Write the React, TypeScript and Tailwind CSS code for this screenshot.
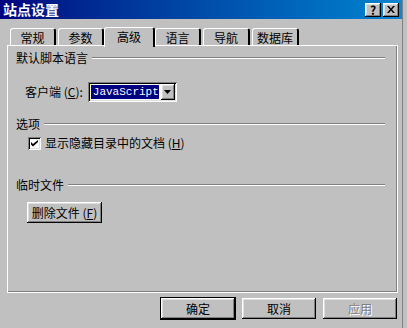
import React from "react";

const font = { fontFamily: '"Noto Sans CJK SC", "Liberation Sans", sans-serif' };

const raised =
  "bg-[#c0c0c0] shadow-[inset_-1px_-1px_#000,inset_1px_1px_#fff,inset_-2px_-2px_#808080,inset_2px_2px_#dfdfdf]";
const sunken =
  "shadow-[inset_1px_1px_#808080,inset_-1px_-1px_#fff,inset_2px_2px_#000,inset_-2px_-2px_#dfdfdf]";

function GroupTitle({ label }: { label: string }) {
  return (
    <div className="flex items-center h-[14px]">
      <span className="text-[12px] leading-[14px] text-black">{label}</span>
      <div className="flex-1 ml-[4px] h-[2px] border-t border-[#808080] border-b border-b-white" />
    </div>
  );
}

function Tab({ label, active, w }: { label: string; active?: boolean; w: string }) {
  if (active) {
    return (
      <div
        className={`${w} h-[20px] -mx-[2px] mb-[-2px] z-10 relative bg-[#c0c0c0] rounded-t-[3px] border-t border-l border-white border-r-2 border-r-black flex items-start justify-center pt-[2px] text-[12px] leading-[14px]`}
      >
        {label}
      </div>
    );
  }
  return (
    <div
      className={`${w} h-[17px] bg-[#c0c0c0] rounded-t-[3px] border-t border-l border-white border-r-2 border-r-black flex items-center justify-center pt-[1px] text-[12px] leading-[14px]`}
    >
      {label}
    </div>
  );
}

function Btn({ children, def, disabled }: { children: React.ReactNode; def?: boolean; disabled?: boolean }) {
  return (
    <div
      className={`w-[74px] h-[21px] flex items-center justify-center text-[12px] ${raised} ${def ? "outline outline-1 outline-black" : ""} ${disabled ? "text-[#808080] [text-shadow:1px_1px_#fff]" : "text-black"}`}
    >
      {children}
    </div>
  );
}

export default function App() {
  return (
    <div className="w-[407px] h-[328px] bg-[#c0c0c0] overflow-hidden flex" style={font}>
      <div className="w-[403px] flex flex-col border-r border-[#808080]">
        {/* title bar */}
        <div className="h-[19px] bg-linear-to-r from-[#000080] to-[#1084d0] flex items-center pl-[3px] pr-[3px]">
          <span className="text-white text-[14px] font-bold leading-[15px] flex-1">站点设置</span>
          <div className={`w-[16px] h-[14px] ${raised} flex items-center justify-center text-[12px] font-bold leading-none text-black`}>?</div>
          <div className={`w-[16px] h-[14px] ml-[2px] ${raised} flex items-center justify-center`}>
            <svg width="8" height="7" viewBox="0 0 8 7">
              <path d="M0 0h2l2 2.5L6 0h2L5 3.5 8 7H6L4 4.5 2 7H0l3-3.5z" fill="#000" />
            </svg>
          </div>
        </div>

        {/* tabs */}
        <div className="flex items-end pl-[10px] mt-[9px] h-[17px] gap-[2px]">
          <Tab label="常规" w="w-[46px]" />
          <Tab label="参数" w="w-[46px]" />
          <Tab label="高级" w="w-[51px]" active />
          <Tab label="语言" w="w-[46px]" />
          <Tab label="导航" w="w-[47px]" />
          <Tab label="数据库" w="w-[47px]" />
        </div>

        {/* panel */}
        <div className="ml-[7px] w-[391px] h-[248px] border-t border-l border-white border-r border-b border-black shadow-[inset_-1px_-1px_#808080] pl-[8px] pr-[12px] pt-[5px] flex flex-col text-[12px] text-black">
          <GroupTitle label="默认脚本语言" />
          <div className="flex items-center mt-[17px] pl-[9px] h-[20px]">
            <span className="leading-[14px]">
              客户端 (<span className="underline">C</span>):
            </span>
            <div className={`ml-[5px] w-[89px] h-[20px] bg-white ${sunken} flex items-center p-[2px]`}>
              <div
                className="flex-1 h-[14px] ml-[1px] bg-[#000080] text-white flex items-center pl-[2px] outline outline-1 outline-dotted outline-[#ffff80] text-[11px] leading-none"
                style={{ fontFamily: '"Liberation Mono", monospace' }}
              >
                JavaScript
              </div>
              <div className={`w-[16px] h-[16px] ml-[2px] ${raised} flex items-center justify-center`}>
                <svg width="7" height="4" viewBox="0 0 7 4">
                  <path d="M0 0h7L3.5 4z" fill="#000" />
                </svg>
              </div>
            </div>
          </div>

          <div className="mt-[15px]">
            <GroupTitle label="选项" />
          </div>
          <div className="flex items-center mt-[5px] pl-[12px] h-[14px]">
            <div className={`w-[13px] h-[13px] bg-white ${sunken} flex items-center justify-center`}>
              <svg width="7" height="7" viewBox="0 0 7 7">
                <path d="M0 2l2 2 5-4v2L2 6.5 0 4.5z" fill="#000" />
              </svg>
            </div>
            <span className="ml-[4px] leading-[14px]">
              显示隐藏目录中的文档 (<span className="underline">H</span>)
            </span>
          </div>

          <div className="mt-[28px]">
            <GroupTitle label="临时文件" />
          </div>
          <div className={`mt-[10px] ml-[11px] w-[75px] h-[21px] ${raised} flex items-center justify-center`}>
            删除文件 (<span className="underline">F</span>)
          </div>
        </div>

        {/* buttons */}
        <div className="flex justify-end gap-[7px] pr-[5px] mt-[5px]">
          <Btn def>确定</Btn>
          <Btn>取消</Btn>
          <Btn disabled>应用</Btn>
        </div>
      </div>
    </div>
  );
}
